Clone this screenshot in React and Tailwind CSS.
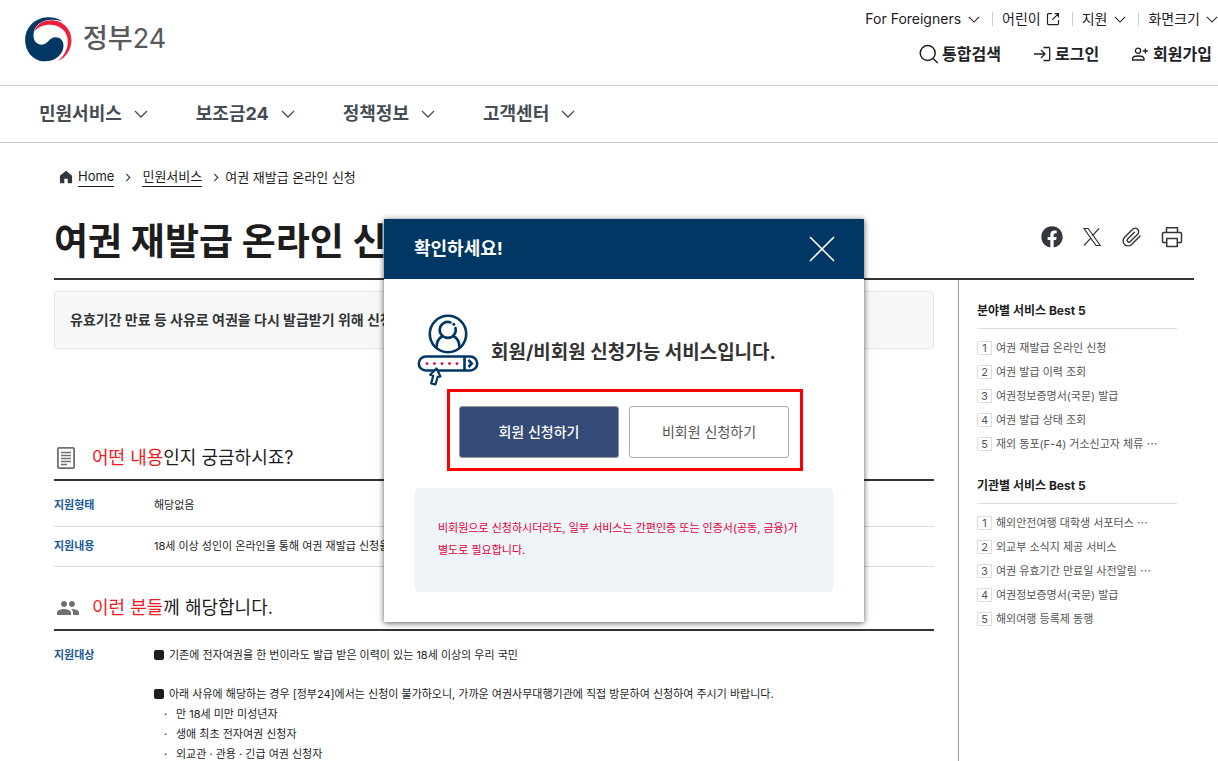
import React from 'react';
import { FaFacebook } from 'react-icons/fa';
import { MdGroup } from 'react-icons/md';

const NAV = ['민원서비스', '보조금24', '정책정보', '고객센터'];

const RANKS = [
  {
    title: '분야별 서비스 Best 5',
    items: [
      '여권 재발급 온라인 신청',
      '여권 발급 이력 조회',
      '여권정보증명서(국문) 발급',
      '여권 발급 상태 조회',
      '재외 동포(F-4) 거소신고자 체류 ⋯',
    ],
  },
  {
    title: '기관별 서비스 Best 5',
    items: [
      '해외안전여행 대학생 서포터스 ⋯',
      '외교부 소식지 제공 서비스',
      '여권 유효기간 만료일 사전알림 ⋯',
      '여권정보증명서(국문) 발급',
      '해외여행 등록제 동행',
    ],
  },
];

const ChevronDown = ({ className }) => (
  <svg viewBox="0 0 14 8" className={className} fill="none" stroke="currentColor" strokeWidth="1.3">
    <path d="M1 1l6 6 6-6" />
  </svg>
);

const ChevronRight = () => (
  <svg viewBox="0 0 6 10" className="h-[9px] w-[6px]" fill="none" stroke="#33363d" strokeWidth="1.2">
    <path d="M1 1l4 4-4 4" />
  </svg>
);

const Logo = () => (
  <svg viewBox="75 50 140 135" className="h-[45px] w-[47px]">
    <path
      fill="#003764"
      d="M187 64C172 53 156 50 143 51C104 52 75 82 75 119C75 155 101 183 134 183C166 183 190 161 190 136C190 121 180 111 166 111C147 111 143 133 125 133C109 133 99 120 100 103C101 78 120 62 145 59C162 57 177 60 187 64Z"
    />
    <path
      fill="#f01e3c"
      d="M102 94C110 71 129 60 152 60C188 60 214 86 214 120C214 148 196 174 172 182C191 168 203 147 203 124C203 93 180 73 149 73C130 73 113 80 102 94Z"
    />
  </svg>
);

const SearchIcon = () => (
  <svg viewBox="0 0 20 20" className="size-5" fill="none" stroke="currentColor" strokeWidth="1.5">
    <circle cx="8.700" cy="9" r="7.500" />
    <path d="M14 14.500l4.800 4.500" />
  </svg>
);

const ExternalIcon = () => (
  <svg viewBox="0 0 14 14" className="size-[14px]" fill="none" stroke="currentColor" strokeWidth="1.2">
    <path d="M6 1.6H2.5a1 1 0 0 0-1 1v9a1 1 0 0 0 1 1h9a1 1 0 0 0 1-1V8M8.5 1.6h4v4M12.5 1.6L6.3 7.8" />
  </svg>
);

const LoginIcon = () => (
  <svg viewBox="0 0 18 16" className="h-4 w-[18px]" fill="none" stroke="currentColor" strokeWidth="1.3">
    <path d="M1 8h11M8 4l4 4-4 4M10.500 1.500H16a.7.7 0 0 1 .7.7v11.600a.7.7 0 0 1-.7.7h-5.500" />
  </svg>
);

const JoinIcon = () => (
  <svg viewBox="0 0 18 16" className="h-4 w-[18px]" fill="none" stroke="currentColor" strokeWidth="1.3">
    <circle cx="7" cy="4.800" r="2.600" />
    <path d="M1.500 14v-1.200c0-2 2.300-2.800 5.700-2.800s5.800.8 5.800 2.800V14zM14.300 2.500v5M11.800 5h5" />
  </svg>
);

const HomeIcon = () => (
  <svg viewBox="0 0 14 14" className="size-[14px]" fill="#33363d">
    <path d="M7 .8L.9 5.800v6.700c0 .5.300.8.800.8h3.600V8.700h3.400v4.600h3.600c.5 0 .8-.3.800-.8V5.800z" />
  </svg>
);

const XIcon = () => (
  <svg viewBox="0 0 22 22" className="size-[22px]" fill="none" stroke="currentColor" strokeWidth="1.2">
    <path d="M3 2.500h4.200l12 17H15zM18 2.500l-6.700 7.400M9.700 12.200L3 19.500" />
  </svg>
);

const ClipIcon = () => (
  <svg viewBox="-11 -11 22 22" className="size-[22px]" fill="none" stroke="currentColor" strokeWidth="1.400" strokeLinecap="round">
    <path
      transform="rotate(-45)"
      d="M6.500 5H-5.500a5 5 0 0 1 0-10H6a3.500 3.500 0 0 1 0 7H-4.500a1.800 1.800 0 0 1 0-3.600H5"
    />
  </svg>
);

const PrintIcon = () => (
  <svg viewBox="0 0 22 22" className="size-[22px]" fill="none" stroke="currentColor" strokeWidth="1.5" strokeLinejoin="round">
    <path d="M5.500 6.500V1.800h11v4.700M5.500 16.500h-3a1 1 0 0 1-1-1v-8a1 1 0 0 1 1-1h17a1 1 0 0 1 1 1v8a1 1 0 0 1-1 1h-3" />
    <path d="M5.700 12.500h10.600v8H5.700z" />
  </svg>
);

const DocIcon = () => (
  <svg viewBox="0 0 20 24" className="h-6 w-5" fill="none" stroke="#707070" strokeWidth="1.800">
    <rect x="1.900" y="1.900" width="16.200" height="20.200" rx="1" />
    <path strokeWidth="1.300" d="M5 6.500h10M5 9.500h10M5 12.500h10M5 15.500h10M5 18.500h6" />
  </svg>
);

const MemberIcon = () => (
  <svg viewBox="0 0 62 72" className="h-[72px] w-[62px]" fill="none" stroke="#003764" strokeWidth="2.600">
    <circle cx="31" cy="20" r="18.200" />
    <path strokeLinecap="round" d="M33.500 8.400A8 8 0 1 0 38.500 14" />
    <circle cx="36.800" cy="10.300" r="1.500" fill="#003764" stroke="none" />
    <path d="M19.500 34c0-6 2-10 6.200-11.700M42.500 34c0-6-2-10-6.200-11.700" />
    <rect x="1.800" y="42.500" width="58.400" height="14" rx="7" />
    <path d="M47.500 42.500v14M51.500 46l3.300 3.500-3.300 3.500" />
    <g fill="#e4003a" stroke="none">
      <circle cx="10" cy="49.600" r="1.400" />
      <circle cx="17.500" cy="49.600" r="1.400" />
      <circle cx="25" cy="49.600" r="1.400" />
      <circle cx="32.500" cy="49.600" r="1.400" />
      <circle cx="40" cy="49.600" r="1.400" />
    </g>
    <path fill="#fff" strokeWidth="2.200" strokeLinejoin="round" d="M19.500 54.500l-6.300 6.200 3 1-2 7.700 4.300.9 2.200-7.500 2.800-.4z" />
  </svg>
);

const UtilMenu = () => (
  <ul className="flex h-5 items-center text-sm text-[#1e2124]">
    <li>
      <button className="flex items-center gap-[7px] pr-3">
        For Foreigners <ChevronDown className="h-[7px] w-3" />
      </button>
    </li>
    <li className="h-[14px] border-l border-[#cdd1d5]" />
    <li>
      <a href="#kids" className="flex items-center gap-[5px] pr-3 pl-[9px]">
        어린이 <ExternalIcon />
      </a>
    </li>
    <li className="h-[14px] border-l border-[#cdd1d5]" />
    <li>
      <button className="flex items-center gap-[7px] pr-3 pl-[9px]">
        지원 <ChevronDown className="h-[7px] w-3" />
      </button>
    </li>
    <li className="h-[14px] border-l border-[#cdd1d5]" />
    <li>
      <button className="flex items-center gap-[6px] pl-[9px]">
        화면크기 <ChevronDown className="h-[7px] w-3" />
      </button>
    </li>
  </ul>
);

const SectionTitle = ({ icon, accent, children }) => (
  <h2 className="flex h-12 items-center border-b-2 border-[#333] pt-[3px] text-lg text-[#1d1d1d]">
    <span className="flex w-[38px] pl-[2px]">{icon}</span>
    <span>
      <span className="text-[#ed1c24]">{accent}</span>
      {children}
    </span>
  </h2>
);

const Dialog = () => (
  <div
    role="dialog"
    aria-labelledby="dialog-title"
    className="absolute top-[219px] left-[384px] w-[480px] bg-white pb-[30px] shadow-[0_1px_6px_rgba(0,0,0,0.65)]"
  >
    <div className="flex h-[60px] items-center justify-between bg-[#003764] pr-[29px] pl-[30px] text-white">
      <h2 id="dialog-title" className="text-lg font-bold">확인하세요!</h2>
      <button aria-label="닫기">
        <svg viewBox="0 0 26 26" className="size-[26px]" stroke="currentColor" strokeWidth="1.600">
          <path d="M1 1l24 24M25 1L1 25" />
        </svg>
      </button>
    </div>

    <div className="flex items-center gap-3 px-[33px] pt-[35px] text-[#333]">
      <MemberIcon />
      <p className="pt-[6px] text-[19px] font-bold">회원/비회원 신청가능 서비스입니다.</p>
    </div>

    {/* 회원 / 비회원 선택 */}
    <div className="mt-[3px] ml-[63px] flex w-[356px] gap-[10px] border-[3px] border-[#f00] px-[9px] pt-[14px] pb-[10px] text-sm">
      <button className="h-[52px] w-40 rounded-[3px] border border-[#999] bg-[#344b78] font-medium text-white">
        회원 신청하기
      </button>
      <button className="h-[52px] w-40 rounded-[3px] border border-[#aaa] bg-white text-[#555]">
        비회원 신청하기
      </button>
    </div>

    <p className="mx-[30px] mt-[17px] h-[104px] rounded-md bg-[#eff4f8] px-6 pt-[29px] text-[11px] leading-[22px] text-[#e4003a]">
      비회원으로 신청하시더라도, 일부 서비스는 간편인증 또는 인증서(공동, 금융)가 별도로 필요합니다.
    </p>
  </div>
);

const App = () => {
  return (
    <div className="relative flex min-h-screen flex-col overflow-hidden bg-white font-['Inter','Noto_Sans_CJK_KR',sans-serif] break-keep text-[#1d1d1d]">
      {/* Header */}
      <header>
        <div className="flex h-[86px] justify-between border-b border-[#cacdd5] pl-[25px]">
          <a href="#main" className="flex h-[78px] items-center gap-[11px] text-[27px] text-[#58595b]">
            <Logo />
            <span>
              <span className="font-medium">정부</span>24
            </span>
          </a>
          <div className="flex flex-col items-end gap-[13px] pt-[9px]">
            <UtilMenu />
            <div className="flex h-6 items-center gap-8 pr-[6px] font-bold text-[#1e2124]">
              <button className="flex items-center gap-[3px]">
                <SearchIcon />
                통합검색
              </button>
              <a href="#login" className="flex items-center gap-1">
                <LoginIcon />
                로그인
              </a>
              <a href="#join" className="flex items-center gap-1">
                <JoinIcon />
                회원가입
              </a>
            </div>
          </div>
        </div>
        <nav className="flex h-[57px] items-center gap-12 border-b border-[#cacdd5] pl-[39px] text-lg font-bold text-[#464c53]">
          {NAV.map((name) => (
            <button key={name} className="flex items-center gap-3">
              {name} <ChevronDown className="h-2 w-[14px]" />
            </button>
          ))}
        </nav>
      </header>

      <main id="main" className="flex flex-1 flex-col pr-6 pl-[54px]">
        {/* Breadcrumb */}
        <div className="mt-6 flex h-5 items-center pl-[5px] text-[13px] leading-[19px]">
          <HomeIcon />
          <a href="#home" className="ml-[5px] border-b border-[#1d1d1d]">Home</a>
          <span className="px-[11px]"><ChevronRight /></span>
          <a href="#service" className="border-b border-[#1d1d1d]">민원서비스</a>
          <span className="pr-[6px] pl-[11px]"><ChevronRight /></span>
          <span>여권 재발급 온라인 신청</span>
        </div>

        <div className="mt-7 flex items-start justify-between border-b-2 border-[#333] pr-[11px] pb-[9px]">
          <h1 className="text-[37px] leading-[54px] font-bold">여권 재발급 온라인 신청</h1>
          <div className="flex gap-[18px] pt-[11px] text-[#33363d]">
            <button aria-label="페이스북"><FaFacebook size={22} /></button>
            <button aria-label="X"><XIcon /></button>
            <button aria-label="주소 복사"><ClipIcon /></button>
            <button aria-label="인쇄"><PrintIcon /></button>
          </div>
        </div>

        <div className="flex flex-1 gap-6">
          <div className="min-w-0 flex-1">
            <p className="mt-[11px] flex h-[58px] items-center rounded border border-[#e4e5ee] bg-[#f7f8fa] px-[15px] text-sm font-bold text-[#333]">
              유효기간 만료 등 사유로 여권을 다시 발급받기 위해 신청하는 민원입니다.
            </p>

            <section className="mt-[84px] text-[11px]">
              <SectionTitle icon={<DocIcon />} accent="어떤 내용">인지 궁금하시죠?</SectionTitle>
              <dl>
                <div className="flex h-[46px] items-center border-b border-[#ddd] pt-1">
                  <dt className="w-[100px] font-bold text-[#1a5a96]">지원형태</dt>
                  <dd>해당없음</dd>
                </div>
                <div className="flex h-10 items-center border-b border-[#ddd]">
                  <dt className="w-[100px] font-bold text-[#1a5a96]">지원내용</dt>
                  <dd>18세 이상 성인이 온라인을 통해 여권 재발급 신청을 하는 서비스</dd>
                </div>
              </dl>
            </section>

            <section className="mt-4 text-[11px]">
              <SectionTitle icon={<MdGroup size={24} color="#707070" />} accent="이런 분들">께 해당합니다.</SectionTitle>
              <dl className="flex pt-[14px] leading-5">
                <dt className="w-[100px] font-bold text-[#1a5a96]">지원대상</dt>
                <dd>
                  <p className="flex items-center gap-[5px]">
                    <span className="size-[10px] rounded-[2px] bg-[#1d1d1d]" />
                    기존에 전자여권을 한 번이라도 발급 받은 이력이 있는 18세 이상의 우리 국민
                  </p>
                  <p className="mt-[19px] flex items-center gap-[5px]">
                    <span className="size-[10px] rounded-[2px] bg-[#1d1d1d]" />
                    아래 사유에 해당하는 경우 [정부24]에서는 신청이 불가하오니, 가까운 여권사무대행기관에 직접 방문하여 신청하여 주시기 바랍니다.
                  </p>
                  <ul className="pl-[10px]">
                    {['만 18세 미만 미성년자', '생애 최초 전자여권 신청자', '외교관 · 관용 · 긴급 여권 신청자'].map((text) => (
                      <li key={text} className="flex">
                        <span className="w-3">·</span>
                        {text}
                      </li>
                    ))}
                  </ul>
                </dd>
              </dl>
            </section>
          </div>

          {/* Best 5 */}
          <aside className="flex w-[236px] flex-col gap-[22px] border-l border-[#999] pt-[21px] pr-[17px] pl-[18px]">
            {RANKS.map((rank) => (
              <section key={rank.title}>
                <h3 className="border-b border-[#ddd] pb-[7px] text-xs leading-5 font-bold">{rank.title}</h3>
                <ol className="flex flex-col gap-1 pt-[9px] text-[11px] leading-5 text-[#555]">
                  {rank.items.map((item, i) => (
                    <li key={item} className="flex items-center gap-1">
                      <span className="flex h-[14px] w-[15px] items-center justify-center border border-[#ddd]">
                        {i + 1}
                      </span>
                      <a href="#rank" className="whitespace-nowrap">{item}</a>
                    </li>
                  ))}
                </ol>
              </section>
            ))}
          </aside>
        </div>
      </main>

      <Dialog />
    </div>
  );
};

export default App;
